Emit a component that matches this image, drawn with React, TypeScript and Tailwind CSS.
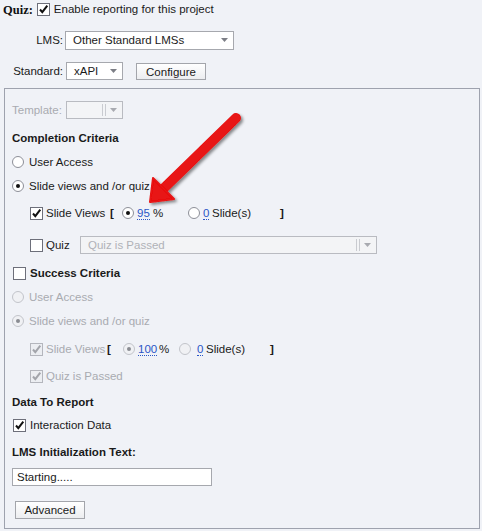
import React from "react";

const ui = { fontFamily: '"Liberation Sans", Arial, sans-serif' };

const Checkbox = ({ checked = false, disabled = false }: { checked?: boolean; disabled?: boolean }) => (
  <span
    className={`inline-flex h-[13px] w-[13px] shrink-0 items-center justify-center border ${
      disabled ? "border-[#b4b6bd] bg-[#eceef2]" : "border-[#6d6f7a] bg-white"
    }`}
  >
    {checked && (
      <svg width="11" height="11" viewBox="0 0 11 11">
        <path
          d="M2 5.5 L4.3 8.2 L9.3 1.6"
          fill="none"
          stroke={disabled ? "#a3a5ab" : "#111"}
          strokeWidth="2"
        />
      </svg>
    )}
  </span>
);

const Radio = ({ checked = false, disabled = false }: { checked?: boolean; disabled?: boolean }) => (
  <span
    className={`inline-flex h-[12px] w-[12px] shrink-0 items-center justify-center rounded-full border ${
      disabled ? "border-[#c2c4ca] bg-[#f0f1f4]" : "border-[#8d8f98] bg-white"
    }`}
  >
    {checked && (
      <span className={`h-[4px] w-[4px] rounded-full ${disabled ? "bg-[#8a8c92]" : "bg-[#111]"}`} />
    )}
  </span>
);

const Arrow = ({ disabled = false }: { disabled?: boolean }) => (
  <svg width="7" height="4" viewBox="0 0 7 4">
    <path d="M0 0 H7 L3.5 4 Z" fill={disabled ? "#a8aab0" : "#7c7e86"} />
  </svg>
);

const Select = ({
  text,
  className,
  disabled = false,
}: {
  text?: string;
  className: string;
  disabled?: boolean;
}) => (
  <div
    className={`flex items-center border ${
      disabled ? "border-[#b9bbc1] bg-[#f3f4f6] text-[#b0b2b8]" : "border-[#a6a8ae] bg-white text-[#1a1a1a]"
    } ${className}`}
  >
    <span className="flex-1 truncate pl-[7px] pt-[2px]">{text}</span>
    {disabled && (
      <span className="mr-[4px] flex h-[12px] gap-[2px]">
        <span className="w-px bg-[#c9cbd0]" />
        <span className="w-px bg-[#c9cbd0]" />
      </span>
    )}
    <span className="mr-[5px] flex items-center">
      <Arrow disabled={disabled} />
    </span>
  </div>
);

const Value = ({ v }: { v: string }) => (
  <span className="border-b border-dotted border-[#2a56c6] leading-[12px] text-[#2a56c6]">{v}</span>
);

export default function App() {
  return (
    <div className="relative h-[531px] w-[482px] overflow-hidden bg-[#f0f2f7] text-[11.5px] text-[#1a1a1a]" style={ui}>
      {/* top settings */}
      <div className="flex h-[18px] items-center pl-[3px]">
        <span className="pt-[2px] text-[12.5px] font-bold text-[#111]" style={{ fontFamily: '"Liberation Serif", serif' }}>
          Quiz:
        </span>
        <span className="ml-[4px] flex">
          <Checkbox checked />
        </span>
        <span className="ml-[4px] pt-[2px]">Enable reporting for this project</span>
      </div>

      <div className="mt-[13px] flex h-[18px] items-center">
        <span className="w-[63px] pt-[2px] text-right">LMS:</span>
        <Select text="Other Standard LMSs" className="ml-[2px] h-[19px] w-[169px]" />
      </div>

      <div className="mt-[13px] flex h-[18px] items-center">
        <span className="w-[63px] pt-[2px] text-right">Standard:</span>
        <Select text="xAPI" className="ml-[3px] h-[18px] w-[57px]" />
        <button className="ml-[13px] h-[17px] w-[70px] border border-[#a3a5ab] bg-gradient-to-b from-white to-[#ecedf0] pt-[1px] text-[11.5px] leading-[15px] text-[#1a1a1a]">
          Configure
        </button>
      </div>

      {/* reporting panel */}
      <div className="ml-[4px] mt-[8px] h-[441px] w-[476px] border border-[#9ea2ae] pl-[7px] pt-[11px]">
        <div className="flex h-[19px] items-center">
          <span className="w-[54px] pt-[2px] text-[#a9abb1]">Template:</span>
          <Select className="h-[18px] w-[57px]" disabled />
        </div>

        <div className="mt-[10px] flex h-[18px] items-center pt-[2px] font-bold">Completion Criteria</div>

        <div className="mt-[6px] flex h-[18px] items-center gap-[5px]">
          <Radio />
          <span className="pt-[2px]">User Access</span>
        </div>

        <div className="mt-[6px] flex h-[18px] items-center gap-[5px]">
          <Radio checked />
          <span className="pt-[2px]">Slide views and /or quiz</span>
        </div>

        <div className="mt-[9px] flex h-[18px] items-center pl-[18px]">
          <Checkbox checked />
          <span className="ml-[3px] w-[64px] pt-[2px]">Slide Views</span>
          <span className="w-[12px] pt-[2px] font-bold">[</span>
          <Radio checked />
          <span className="ml-[3px] w-[16px] pt-[2px]">
            <Value v="95" />
          </span>
          <span className="w-[35px] pt-[2px]">%</span>
          <Radio />
          <span className="ml-[3px] w-[9px] pt-[2px]">
            <Value v="0" />
          </span>
          <span className="w-[68px] pt-[2px]">Slide(s)</span>
          <span className="pt-[2px] font-bold">]</span>
        </div>

        <div className="mt-[14px] flex h-[18px] items-center pl-[18px]">
          <Checkbox />
          <span className="ml-[3px] w-[34px] pt-[2px]">Quiz</span>
          <Select text="Quiz is Passed" className="h-[18px] w-[297px]" disabled />
        </div>

        <div className="mt-[10px] flex h-[18px] items-center gap-[4px] pl-[1px]">
          <Checkbox />
          <span className="pt-[2px] font-bold">Success Criteria</span>
        </div>

        <div className="mt-[6px] flex h-[18px] items-center gap-[5px] text-[#a9abb1]">
          <Radio disabled />
          <span className="pt-[2px]">User Access</span>
        </div>

        <div className="mt-[6px] flex h-[18px] items-center gap-[5px] text-[#a9abb1]">
          <Radio checked disabled />
          <span className="pt-[2px]">Slide views and /or quiz</span>
        </div>

        <div className="mt-[10px] flex h-[18px] items-center pl-[18px]">
          <Checkbox checked disabled />
          <span className="ml-[3px] w-[61px] pt-[2px] text-[#a9abb1]">Slide Views</span>
          <span className="w-[16px] pt-[2px] font-bold">[</span>
          <Radio checked disabled />
          <span className="ml-[3px] w-[21px] pt-[2px]">
            <Value v="100" />
          </span>
          <span className="w-[20px] pt-[2px]">%</span>
          <Radio disabled />
          <span className="ml-[6px] w-[9px] pt-[2px]">
            <Value v="0" />
          </span>
          <span className="w-[64px] pt-[2px]">Slide(s)</span>
          <span className="pt-[2px] font-bold">]</span>
        </div>

        <div className="mt-[9px] flex h-[18px] items-center gap-[3px] pl-[18px] text-[#a9abb1]">
          <Checkbox checked disabled />
          <span className="pt-[2px]">Quiz is Passed</span>
        </div>

        <div className="mt-[8px] flex h-[18px] items-center pt-[2px] font-bold">Data To Report</div>

        <div className="mt-[5px] flex h-[18px] items-center gap-[4px] pl-[1px]">
          <Checkbox checked />
          <span className="pt-[2px]">Interaction Data</span>
        </div>

        <div className="mt-[9px] flex h-[18px] items-center pt-[2px] font-bold">LMS Initialization Text:</div>

        <div className="mt-[7px] flex h-[18px] w-[200px] items-center border border-[#a6a8ae] bg-white pl-[4px] pt-[1px]">
          Starting.....
        </div>

        <button className="ml-[3px] mt-[15px] h-[18px] w-[70px] border border-[#a3a5ab] bg-gradient-to-b from-white to-[#ecedf0] pt-[1px] text-[11.5px] leading-[15px] text-[#1a1a1a]">
          Advanced
        </button>
      </div>

      {/* red annotation arrow, drawn over the panel */}
      <svg className="pointer-events-none absolute left-0 top-0" width="482" height="531" viewBox="0 0 482 531">
        <defs>
          <filter id="sh" x="-20%" y="-20%" width="140%" height="140%">
            <feDropShadow dx="2" dy="2" stdDeviation="1.5" floodColor="#000" floodOpacity="0.45" />
          </filter>
        </defs>
        <g filter="url(#sh)">
          <line x1="236" y1="118" x2="163" y2="189" stroke="#e81212" strokeWidth="10" strokeLinecap="round" />
          <polygon points="150,202 153,178 174,199" fill="#e81212" stroke="#e81212" strokeWidth="2" strokeLinejoin="round" />
        </g>
      </svg>
    </div>
  );
}
